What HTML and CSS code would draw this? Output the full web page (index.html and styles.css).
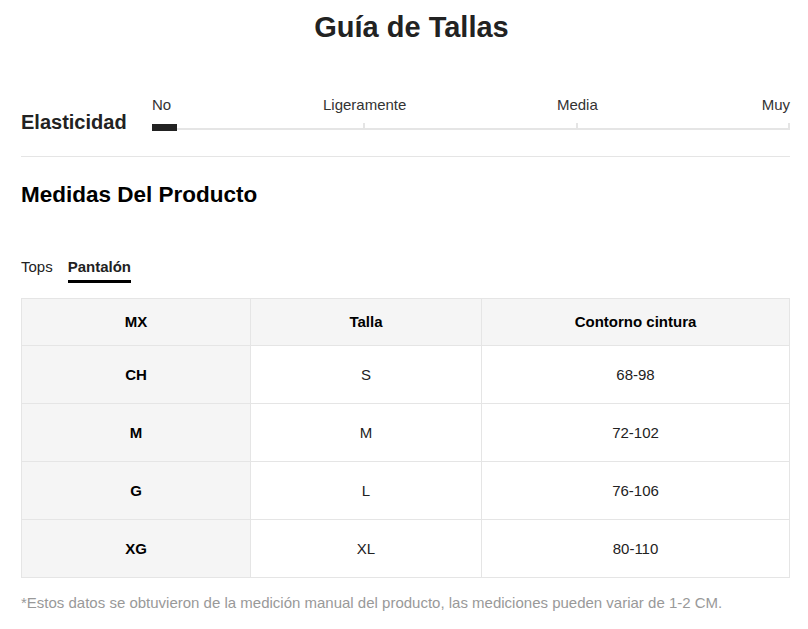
FILE: index.html
```html
<!DOCTYPE html>
<html lang="es">
<head>
<meta charset="utf-8">
<title>Guía de Tallas</title>
<link rel="stylesheet" href="styles.css">
</head>
<body>
<div class="page">
  <h1 class="title">Guía de Tallas</h1>

  <div class="elastic">
    <div class="elastic-label">Elasticidad</div>
    <div class="scale">
      <div class="scale-labels">
        <span class="lbl lbl-start">No</span>
        <span class="lbl lbl-mid1">Ligeramente</span>
        <span class="lbl lbl-mid2">Media</span>
        <span class="lbl lbl-end">Muy</span>
      </div>
      <div class="track">
        <div class="seg"></div>
        <div class="seg"></div>
        <div class="seg"></div>
        <div class="marker"></div>
      </div>
    </div>
  </div>

  <h2 class="section-title">Medidas Del Producto</h2>

  <div class="tabs">
    <span class="tab">Tops</span>
    <span class="tab active">Pantalón</span>
  </div>

  <table class="sizes">
    <colgroup>
      <col class="c1"><col class="c2"><col class="c3">
    </colgroup>
    <thead>
      <tr><th>MX</th><th>Talla</th><th>Contorno cintura</th></tr>
    </thead>
    <tbody>
      <tr><td class="first">CH</td><td>S</td><td>68-98</td></tr>
      <tr><td class="first">M</td><td>M</td><td>72-102</td></tr>
      <tr><td class="first">G</td><td>L</td><td>76-106</td></tr>
      <tr><td class="first">XG</td><td>XL</td><td>80-110</td></tr>
    </tbody>
  </table>

  <p class="note">*Estos datos se obtuvieron de la medición manual del producto, las mediciones pueden variar de 1-2 CM.</p>
</div>
</body>
</html>
```

FILE: styles.css
```css
* { box-sizing: border-box; }

body {
  margin: 0;
  background: #fff;
  font-family: "Liberation Sans", Arial, sans-serif;
  color: #222;
}

.page {
  padding: 0 18px 0 21px;
}

.title {
  margin: 11px 0 0;
  padding-left: 12px;
  font-size: 29px;
  line-height: 32px;
  font-weight: bold;
  text-align: center;
  color: #222;
}

.elastic {
  display: flex;
  align-items: flex-end;
  margin-top: 53px;
  padding-bottom: 26px;
  border-bottom: 1px solid #e5e5e5;
}

.elastic-label {
  width: 131px;
  flex: none;
  font-size: 20px;
  line-height: 20px;
  font-weight: bold;
  color: #222;
  margin-bottom: -2px;
}

.scale {
  flex: 1;
}

.scale-labels {
  display: grid;
  grid-template-columns: repeat(6, 1fr);
  font-size: 15px;
  line-height: 18px;
  color: #333;
}

.lbl-start { grid-column: 1; text-align: left; }
.lbl-mid1 { grid-column: 2 / span 2; text-align: center; }
.lbl-mid2 { grid-column: 4 / span 2; text-align: center; }
.lbl-end { grid-column: 6; text-align: right; }

.track {
  position: relative;
  display: grid;
  grid-template-columns: repeat(3, 1fr);
  margin-top: 9px;
  height: 7px;
  border-bottom: 2px solid #e5e5e5;
}

.seg {
  border-right: 2px solid #e5e5e5;
  height: 5px;
  align-self: end;
}

.seg:nth-child(2) { margin-right: -1px; }

.marker {
  position: absolute;
  left: 0;
  top: 1px;
  width: 25px;
  height: 7px;
  background: #222;
}

.section-title {
  margin: 26px 0 0;
  font-size: 22.5px;
  line-height: 24px;
  font-weight: bold;
  color: #000;
}

.tabs {
  display: flex;
  gap: 15px;
  margin-top: 51px;
}

.tab {
  font-size: 15px;
  line-height: 18px;
  color: #222;
  padding-bottom: 4px;
  border-bottom: 3px solid transparent;
}

.tab.active {
  font-weight: bold;
  color: #222;
  border-bottom-color: #000;
}

.sizes {
  margin-top: 15px;
  width: 100%;
  border-collapse: collapse;
  table-layout: fixed;
  font-size: 15px;
  color: #222;
}

.c1 { width: 229px; }
.c2 { width: 231px; }

.sizes th,
.sizes td {
  border: 1px solid #e5e5e5;
  text-align: center;
  padding: 0;
  line-height: 18px;
}

.sizes th {
  background: #f5f5f5;
  font-weight: bold;
  color: #000;
  height: 47px;
}

.sizes td {
  height: 58px;
}

.sizes td.first {
  background: #f5f5f5;
  font-weight: bold;
  color: #000;
}

.note {
  margin: 16px 0 0;
  font-size: 15px;
  line-height: 18px;
  color: #999;
}
```
